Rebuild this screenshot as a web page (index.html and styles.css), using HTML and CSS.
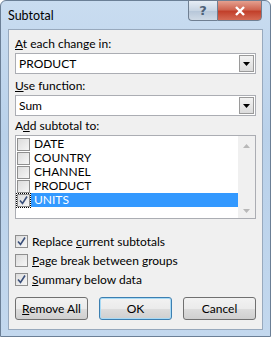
FILE: index.html
```html
<!DOCTYPE html>
<html lang="en">
<head>
    <meta charset="UTF-8">
    <title>Subtotal</title>
    <link rel="stylesheet" href="styles.css">
</head>
<body>
    <div class="window">
        <div class="titlebar">
            <span class="title">Subtotal</span>
            <div class="caption-buttons">
                <button class="cap help">?</button>
                <button class="cap close">
                    <svg width="12" height="10" viewBox="0 0 12 10"><path d="M2 1 L10 9 M10 1 L2 9" stroke="#fff" stroke-width="2.4"/></svg>
                </button>
            </div>
        </div>
        <div class="panel">
            <label class="field-label"><u>A</u>t each change in:</label>
            <div class="select">
                <span>PRODUCT</span>
                <span class="drop"><svg width="7" height="4" viewBox="0 0 7 4"><path d="M0 0 H7 L3.5 4 Z" fill="#000"/></svg></span>
            </div>

            <label class="field-label"><u>U</u>se function:</label>
            <div class="select last">
                <span>Sum</span>
                <span class="drop"><svg width="7" height="4" viewBox="0 0 7 4"><path d="M0 0 H7 L3.5 4 Z" fill="#000"/></svg></span>
            </div>

            <label class="field-label">A<u>d</u>d subtotal to:</label>
            <div class="listbox">
                <div class="items">
                    <div class="item"><span class="box"></span><span class="item-text">DATE</span></div>
                    <div class="item"><span class="box"></span><span class="item-text">COUNTRY</span></div>
                    <div class="item"><span class="box"></span><span class="item-text">CHANNEL</span></div>
                    <div class="item"><span class="box"></span><span class="item-text">PRODUCT</span></div>
                    <div class="item"><span class="box checked focus"><svg width="11" height="11" viewBox="0 0 11 11"><path d="M2 5.5 L4.5 8.5 L9 1.5" stroke="#3a4f7a" stroke-width="1.6" fill="none"/></svg></span><span class="item-text selected">UNITS</span></div>
                </div>
                <div class="scrollbar">
                    <svg width="7" height="4" viewBox="0 0 7 4"><path d="M0 4 H7 L3.5 0 Z" fill="#b8b8b8"/></svg>
                    <svg width="7" height="4" viewBox="0 0 7 4"><path d="M0 0 H7 L3.5 4 Z" fill="#b8b8b8"/></svg>
                </div>
            </div>

            <div class="options">
                <div class="option"><span class="box checked"><svg width="11" height="11" viewBox="0 0 11 11"><path d="M2 5.5 L4.5 8.5 L9 1.5" stroke="#3a4f7a" stroke-width="1.6" fill="none"/></svg></span><span>Replace <u>c</u>urrent subtotals</span></div>
                <div class="option"><span class="box"></span><span><u>P</u>age break between groups</span></div>
                <div class="option"><span class="box checked"><svg width="11" height="11" viewBox="0 0 11 11"><path d="M2 5.5 L4.5 8.5 L9 1.5" stroke="#3a4f7a" stroke-width="1.6" fill="none"/></svg></span><span><u>S</u>ummary below data</span></div>
            </div>

            <div class="buttons">
                <button class="btn"><u>R</u>emove All</button>
                <button class="btn default">OK</button>
                <button class="btn">Cancel</button>
            </div>
        </div>
    </div>
</body>
</html>
```

FILE: styles.css
```css
body {
    margin: 0;
    font-family: Lato, "Noto Sans", sans-serif;
    font-size: 12px;
    color: #000;
    background: #fff;
}
.window {
    width: 271px;
    height: 337px;
    box-sizing: border-box;
    padding: 0 7px 6px 7px;
    display: flex;
    flex-direction: column;
    background: linear-gradient(to bottom, #c9dcf0, #b9d1ea 40%, #c3d8ee);
    border: 1px solid #6b7f96;
    border-radius: 6px 6px 0 0;
}
.titlebar {
    height: 28px;
    display: flex;
    justify-content: space-between;
    align-items: flex-start;
}
.title {
    margin-top: 7px;
    font-size: 12.5px;
}
.caption-buttons {
    display: flex;
    margin-top: -1px;
    margin-right: 1px;
}
.cap {
    height: 21px;
    border: 1px solid #6f7f92;
    padding: 0;
    display: flex;
    align-items: center;
    justify-content: center;
}
.help {
    width: 29px;
    border-radius: 0 0 0 4px;
    border-right: none;
    background: linear-gradient(to bottom, #e6edf5, #c8d5e3 50%, #b5c5d8 51%, #cfdae6);
    color: #4e6178;
    font-family: "DejaVu Sans", sans-serif;
    font-size: 13px;
    font-weight: bold;
}
.close {
    width: 45px;
    border-radius: 0 0 4px 0;
    background: linear-gradient(to bottom, #e4a08f, #cf6652 45%, #c2402b 55%, #d56b55);
}
.panel {
    flex: 1;
    background: #f0f0f0;
    border: 1px solid #98a9bd;
    padding: 4px 6px 0 6px;
    display: flex;
    flex-direction: column;
}
.field-label {
    display: block;
    height: 19px;
    line-height: 19px;
}
.select {
    height: 21px;
    box-sizing: border-box;
    border: 1px solid #abadb3;
    background: #fff;
    display: flex;
    align-items: center;
    justify-content: space-between;
    padding: 0 1px 0 3px;
    margin-bottom: 2px;
}
.select.last {
    margin-bottom: 0;
}
.drop {
    width: 15px;
    height: 17px;
    box-sizing: border-box;
    border: 1px solid #9a9a9a;
    background: linear-gradient(to bottom, #f2f2f2, #dcdcdc);
    display: flex;
    align-items: center;
    justify-content: center;
}
.listbox {
    height: 84px;
    box-sizing: border-box;
    border: 1px solid #abadb3;
    background: #fff;
    display: flex;
}
.items {
    flex: 1;
    padding-top: 1px;
}
.item {
    height: 14px;
    display: flex;
    align-items: center;
    padding-left: 1px;
}
.item-text {
    line-height: 14px;
    padding-left: 3px;
}
.item-text.selected {
    flex: 1;
    background: #3399ff;
    color: #fff;
}
.box {
    width: 13px;
    height: 13px;
    box-sizing: border-box;
    border: 1px solid #8f8f8f;
    background: linear-gradient(135deg, #dcdcdc, #f6f6f6);
    margin-right: 1px;
    flex: none;
    display: flex;
    align-items: center;
    justify-content: center;
}
.box.focus {
    outline: 1px dotted #000;
}
.scrollbar {
    width: 17px;
    background: #f0f0f0;
    display: flex;
    flex-direction: column;
    justify-content: space-between;
    align-items: center;
    padding: 8px 0 5px;
    box-sizing: border-box;
}
.options {
    margin-top: 13px;
}
.option {
    height: 19px;
    display: flex;
    align-items: center;
}
.option .box {
    margin-right: 4px;
}
.buttons {
    display: flex;
    gap: 11px;
    margin-top: 8px;
}
.btn {
    width: 73px;
    height: 23px;
    font-family: inherit;
    font-size: 12px;
    color: #000;
    border: 1px solid #707070;
    border-radius: 3px;
    background: linear-gradient(to bottom, #f2f2f2, #ebebeb 50%, #dddddd 51%, #cfcfcf);
    padding: 0;
}
.btn.default {
    border-color: #3c7fb1;
    box-shadow: inset 0 0 0 1px #a8daf5;
}
```
